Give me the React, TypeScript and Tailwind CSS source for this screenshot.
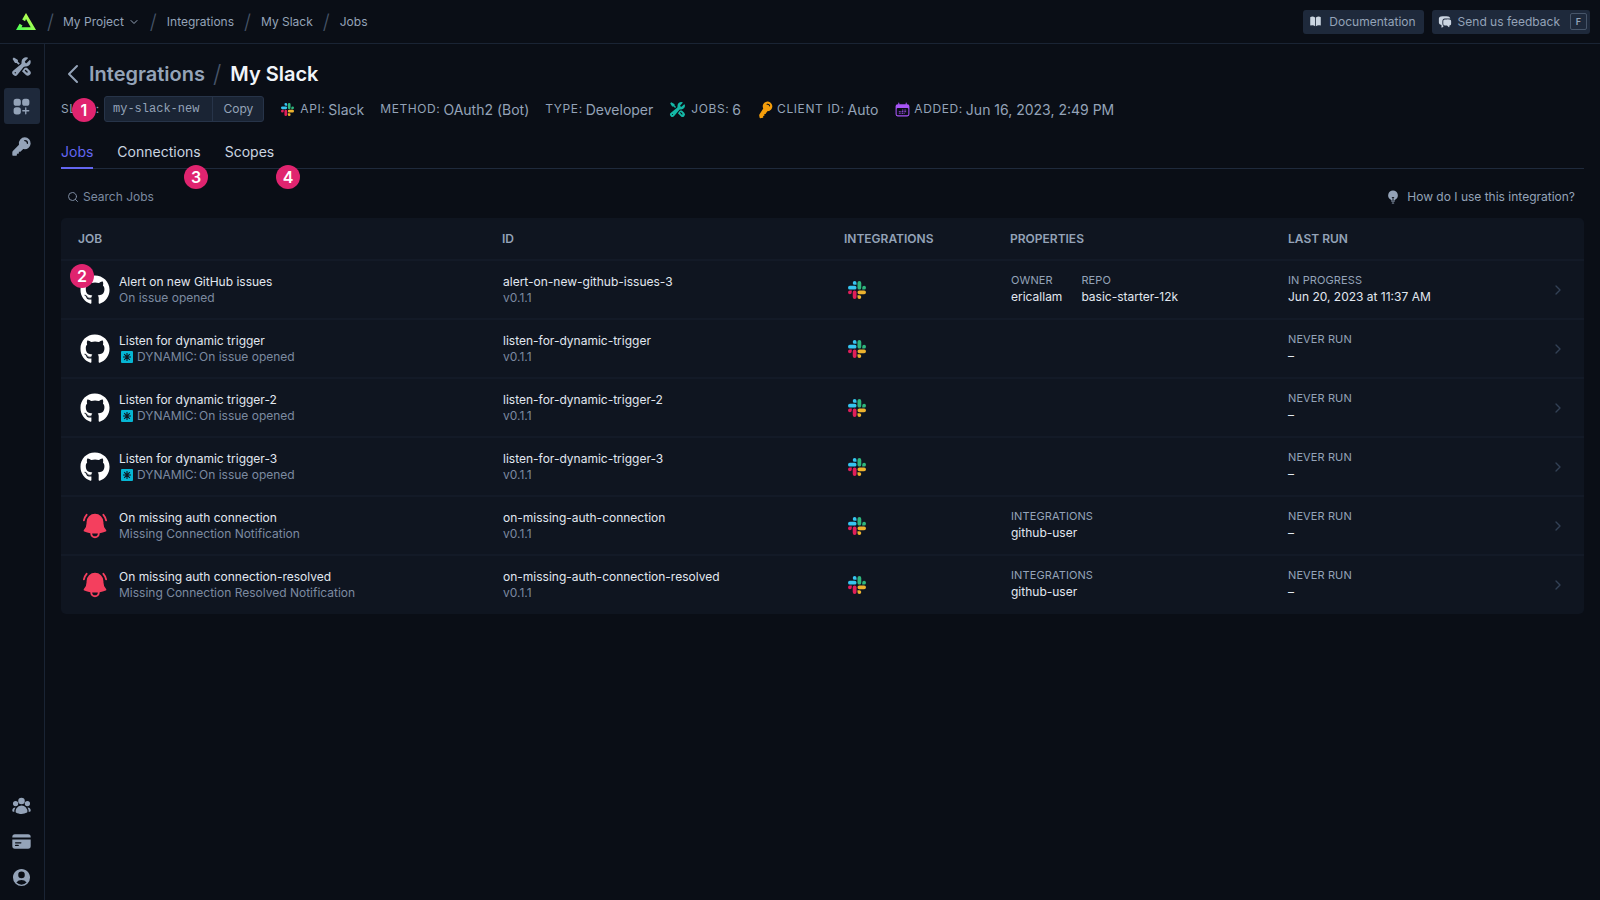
import { ChevronDown, ChevronLeft, ChevronRight, Search } from "lucide-react"
import {
  HiBellAlert,
  HiBookOpen,
  HiCalendarDays,
  HiChatBubbleLeftRight,
  HiCreditCard,
  HiKey,
  HiLightBulb,
  HiSquaresPlus,
  HiUserCircle,
  HiUserGroup,
  HiWrenchScrewdriver,
} from "react-icons/hi2"
import { FaGithub } from "react-icons/fa"

function SlackIcon({ className }: { className: string }) {
  return (
    <svg viewBox="0 0 24 24" className={className}>
      <path fill="#E01E5A" d="M5.042 15.165a2.528 2.528 0 0 1-2.52 2.523A2.528 2.528 0 0 1 0 15.165a2.527 2.527 0 0 1 2.522-2.52h2.52v2.52zM6.313 15.165a2.527 2.527 0 0 1 2.521-2.52 2.527 2.527 0 0 1 2.521 2.52v6.313A2.528 2.528 0 0 1 8.834 24a2.528 2.528 0 0 1-2.521-2.522v-6.313z" />
      <path fill="#36C5F0" d="M8.834 5.042a2.528 2.528 0 0 1-2.521-2.52A2.528 2.528 0 0 1 8.834 0a2.528 2.528 0 0 1 2.521 2.522v2.52H8.834zM8.834 6.313a2.528 2.528 0 0 1 2.521 2.521 2.528 2.528 0 0 1-2.521 2.521H2.522A2.528 2.528 0 0 1 0 8.834a2.528 2.528 0 0 1 2.522-2.521h6.312z" />
      <path fill="#2EB67D" d="M18.956 8.834a2.528 2.528 0 0 1 2.522-2.521A2.528 2.528 0 0 1 24 8.834a2.528 2.528 0 0 1-2.522 2.521h-2.522V8.834zM17.688 8.834a2.528 2.528 0 0 1-2.523 2.521 2.527 2.527 0 0 1-2.52-2.521V2.522A2.527 2.527 0 0 1 15.165 0a2.528 2.528 0 0 1 2.523 2.522v6.312z" />
      <path fill="#ECB22E" d="M15.165 18.956a2.528 2.528 0 0 1 2.523 2.522A2.528 2.528 0 0 1 15.165 24a2.527 2.527 0 0 1-2.52-2.522v-2.522h2.52zM15.165 17.688a2.527 2.527 0 0 1-2.52-2.523 2.526 2.526 0 0 1 2.52-2.52h6.313A2.527 2.527 0 0 1 24 15.165a2.528 2.528 0 0 1-2.522 2.523h-6.313z" />
    </svg>
  )
}

function Logo() {
  return (
    <svg viewBox="0 0 20 17" className="w-[20px] h-[17px]">
      <defs>
        <linearGradient id="logo-g" x1="0" y1="1" x2="1" y2="0">
          <stop offset="0" stopColor="#41ff54" />
          <stop offset="1" stopColor="#e7ff52" />
        </linearGradient>
      </defs>
      <path fill="url(#logo-g)" fillRule="evenodd" d="M6.2 6.6 10 0l10 17H0l3.6-6.2 2.9 1.7-1 1.7h9.2L10 6 9.1 8.3z" />
    </svg>
  )
}

function DynamicIcon() {
  return (
    <svg viewBox="0 0 12 12" className="w-[12px] h-[12px] ml-[2px] mr-[4px] shrink-0">
      <rect width="12" height="12" rx="1" fill="#06b6d4" />
      <path d="M6 2v8M2 6h8M3.2 3.2l5.6 5.6M8.8 3.2l-5.6 5.6" stroke="#0f1520" strokeWidth="1.1" />
    </svg>
  )
}

function Meta({ label, value, icon }: { label: string; value: string; icon?: React.ReactNode }) {
  return (
    <div className="flex items-center gap-[3px] whitespace-nowrap">
      {icon}
      <span className="text-[12px] tracking-[0.05em] text-[#94a3b8] uppercase">{label}:</span>
      <span className="text-[14px] text-[#94a3b8]">{value}</span>
    </div>
  )
}

function Badge({ n, className }: { n: number; className: string }) {
  return (
    <div className={`absolute w-6 h-6 rounded-full bg-[#e0246f] text-white text-[16px] font-semibold flex items-center justify-center ${className}`}>
      {n}
    </div>
  )
}

function Prop({ label, value }: { label: string; value: string }) {
  return (
    <div>
      <div className="text-[11px] leading-4 tracking-[0.01em] uppercase text-[#94a3b8]">{label}</div>
      <div className="mt-[1px] text-[12px] leading-4 text-[#e2e8f0]">{value}</div>
    </div>
  )
}

type Job = {
  icon: "github" | "bell"
  title: string
  sub: string
  dynamic?: boolean
  id: string
  props: { label: string; value: string }[]
  runLabel: string
  run: string
}

const jobs: Job[] = [
  {
    icon: "github",
    title: "Alert on new GitHub issues",
    sub: "On issue opened",
    id: "alert-on-new-github-issues-3",
    props: [
      { label: "Owner", value: "ericallam" },
      { label: "Repo", value: "basic-starter-12k" },
    ],
    runLabel: "In progress",
    run: "Jun 20, 2023 at 11:37 AM",
  },
  { icon: "github", title: "Listen for dynamic trigger", sub: "On issue opened", dynamic: true, id: "listen-for-dynamic-trigger", props: [], runLabel: "Never run", run: "–" },
  { icon: "github", title: "Listen for dynamic trigger-2", sub: "On issue opened", dynamic: true, id: "listen-for-dynamic-trigger-2", props: [], runLabel: "Never run", run: "–" },
  { icon: "github", title: "Listen for dynamic trigger-3", sub: "On issue opened", dynamic: true, id: "listen-for-dynamic-trigger-3", props: [], runLabel: "Never run", run: "–" },
  {
    icon: "bell",
    title: "On missing auth connection",
    sub: "Missing Connection Notification",
    id: "on-missing-auth-connection",
    props: [{ label: "Integrations", value: "github-user" }],
    runLabel: "Never run",
    run: "–",
  },
  {
    icon: "bell",
    title: "On missing auth connection-resolved",
    sub: "Missing Connection Resolved Notification",
    id: "on-missing-auth-connection-resolved",
    props: [{ label: "Integrations", value: "github-user" }],
    runLabel: "Never run",
    run: "–",
  },
]

const crumbs = ["Integrations", "My Slack", "Jobs"]

export default function App() {
  return (
    <div className="h-[900px] w-full overflow-hidden bg-[#0a0e16] flex flex-col font-['Inter',sans-serif] relative">
      {/* Top bar */}
      <div className="h-[44px] shrink-0 border-b border-[#1a2434] flex items-center pl-4 pr-[10px]">
        <Logo />
        <span className="ml-[11px] text-[20px] font-light text-[#475569]">/</span>
        <div className="ml-[9px] flex items-center gap-[4px] text-[12px] text-[#94a3b8]">
          My Project
          <ChevronDown className="w-[12px] h-[12px]" />
        </div>
        {crumbs.map((c) => (
          <div key={c} className="flex items-center text-[12px] text-[#94a3b8]">
            <span className="ml-[10px] mr-[10px] text-[20px] font-light text-[#475569]">/</span>
            {c}
          </div>
        ))}
        <div className="ml-auto flex items-center gap-2">
          <div className="h-6 pl-[6px] pr-[8px] rounded-[3px] bg-[#1e293b] flex items-center gap-[7px] text-[12px] text-[#94a3b8]">
            <HiBookOpen className="w-[13px] h-[13px] text-[#cbd5e1]" />
            Documentation
          </div>
          <div className="h-6 pl-[6px] pr-[3px] rounded-[3px] bg-[#1e293b] flex items-center gap-[6px] text-[12px] text-[#94a3b8]">
            <HiChatBubbleLeftRight className="w-[14px] h-[14px] text-[#cbd5e1]" />
            Send us feedback
            <span className="ml-[4px] w-[17px] h-[17px] border border-[#475569] rounded-[2px] flex items-center justify-center text-[9px] font-semibold">F</span>
          </div>
        </div>
      </div>

      <div className="flex flex-1 min-h-0">
        {/* Sidebar */}
        <div className="w-[45px] shrink-0 border-r border-[#1a2434] flex flex-col items-center text-[#94a3b8] py-[4px]">
          <div className="w-9 h-9 pr-[1px] flex items-center justify-center"><HiWrenchScrewdriver className="w-[21px] h-[21px]" /></div>
          <div className="mt-1 w-9 h-9 pr-[1px] rounded-[3px] bg-[#1e293b] flex items-center justify-center"><HiSquaresPlus className="w-[21px] h-[21px]" /></div>
          <div className="mt-1 w-9 h-9 pr-[1px] flex items-center justify-center"><HiKey className="w-[21px] h-[21px]" /></div>
          <div className="mt-auto w-9 h-9 pr-[1px] flex items-center justify-center"><HiUserGroup className="w-[21px] h-[21px]" /></div>
          <div className="w-9 h-9 pr-[1px] flex items-center justify-center"><HiCreditCard className="w-[21px] h-[21px]" /></div>
          <div className="w-9 h-9 pr-[1px] mb-[1px] flex items-center justify-center"><HiUserCircle className="w-[21px] h-[21px]" /></div>
        </div>

        {/* Main */}
        <div className="flex-1 min-w-0 pl-4 pr-4">
          <div className="flex items-center h-[30px] mt-[15px]">
            <ChevronLeft className="w-[32px] h-[32px] shrink-0 text-[#94a3b8] -ml-[4px]" strokeWidth={1.5} />
            <span className="text-[20px] font-semibold text-[#94a3b8]">Integrations</span>
            <span className="ml-[8px] mr-[9px] text-[24px] font-light text-[#475569]">/</span>
            <span className="text-[20px] font-semibold text-[#f1f5f9]">My Slack</span>
          </div>

          <div className="flex items-center h-[26px] mt-[7px]">
            <span className="w-[43px] text-[12px] tracking-[0.05em] text-[#94a3b8]">SLUG:</span>
            <div className="flex h-[26px] rounded-[3px] bg-[#1a2434] border border-[#273449] text-[#94a3b8]">
              <span className="pl-[8px] pr-[13px] flex items-center text-[12px] font-['Liberation_Mono',monospace] border-r border-[#273449]">my-slack-new</span>
              <span className="px-[10px] flex items-center text-[12px]">Copy</span>
            </div>
            <div className="ml-[17px] flex items-center gap-[16px]">
              <Meta label="API" value="Slack" icon={<SlackIcon className="w-[13px] h-[13px] mr-[3px]" />} />
              <Meta label="Method" value="OAuth2 (Bot)" />
              <Meta label="Type" value="Developer" />
              <Meta label="Jobs" value="6" icon={<HiWrenchScrewdriver className="w-[17px] h-[17px] mr-[2px] text-[#14b8a6]" />} />
              <Meta label="Client ID" value="Auto" icon={<HiKey className="w-[17px] h-[17px] text-[#f59e0b] -rotate-12" />} />
              <Meta label="Added" value="Jun 16, 2023, 2:49 PM" icon={<HiCalendarDays className="w-[17px] h-[17px] text-[#a855f7]" />} />
            </div>
          </div>

          {/* Tabs */}
          <div className="mt-[19px] h-[28px] border-b border-[#1f2a3c] flex gap-6 text-[14px] text-[#cbd5e1]">
            <div className="h-[28px] border-b-2 border-[#6366f1] text-[#6366f1] px-0">Jobs</div>
            <div>Connections</div>
            <div>Scopes</div>
          </div>

          {/* Search row */}
          <div className="h-[49px] pt-[7px] flex items-center justify-between pl-[6px] pr-[9px]">
            <div className="flex items-center gap-[4px] text-[12px] text-[#7c8aa0]">
              <Search className="w-[12px] h-[12px]" />
              Search Jobs
            </div>
            <div className="flex items-center gap-[7px] text-[12px] text-[#94a3b8]">
              <HiLightBulb className="w-[14px] h-[14px]" />
              How do I use this integration?
            </div>
          </div>

          {/* Table */}
          <div className="rounded-[5px] bg-[#0f1520] overflow-hidden pb-[1px]">
            <div className="h-[41px] pt-[1px] grid grid-cols-[424px_342px_166px_278px_1fr] items-center text-[12px] font-semibold text-[#94a3b8] uppercase">
              <div className="pl-[17px]">Job</div>
              <div className="pl-[17px]">ID</div>
              <div className="pl-[17px]">Integrations</div>
              <div className="pl-[17px]">Properties</div>
              <div className="pl-[17px]">Last run</div>
            </div>
            {jobs.map((job) => (
              <div key={job.id} className="h-[59px] border-t-2 border-[#131a27] grid grid-cols-[424px_342px_166px_278px_1fr] items-center">
                <div className="flex items-center pl-[19px]">
                  {job.icon === "github" ? (
                    <FaGithub className="w-[30px] h-[30px] text-white" />
                  ) : (
                    <HiBellAlert className="w-[30px] h-[30px] text-[#f43f5e]" />
                  )}
                  <div className="ml-[9px]">
                    <div className="text-[12px] leading-4 text-[#e2e8f0]">{job.title}</div>
                    <div className="text-[12px] leading-4 text-[#7c8aa0] flex items-center">
                      {job.dynamic && <DynamicIcon />}
                      {job.dynamic ? <span className="mr-[2px]">DYNAMIC:</span> : null}
                      {job.sub}
                    </div>
                  </div>
                </div>
                <div className="pl-[18px]">
                  <div className="text-[12px] leading-4 text-[#e2e8f0]">{job.id}</div>
                  <div className="text-[12px] leading-4 text-[#7c8aa0]">v0.1.1</div>
                </div>
                <div className="pl-[21px]">
                  <SlackIcon className="w-[18px] h-[18px]" />
                </div>
                <div className="pl-[18px] pb-[2px] flex gap-[19px]">
                  {job.props.map((p) => (
                    <Prop key={p.label} label={p.label} value={p.value} />
                  ))}
                </div>
                <div className="pl-[17px] flex items-center pr-[18px]">
                  <div className="pb-[2px]">
                    <Prop label={job.runLabel} value={job.run} />
                  </div>
                  <ChevronRight className="ml-auto w-[16px] h-[16px] text-[#334155]" />
                </div>
              </div>
            ))}
          </div>
        </div>
      </div>

      {/* Callout numbers */}
      <Badge n={1} className="left-[72px] top-[98px]" />
      <Badge n={2} className="left-[70px] top-[264px]" />
      <Badge n={3} className="left-[184px] top-[165px]" />
      <Badge n={4} className="left-[276px] top-[165px]" />
    </div>
  )
}
